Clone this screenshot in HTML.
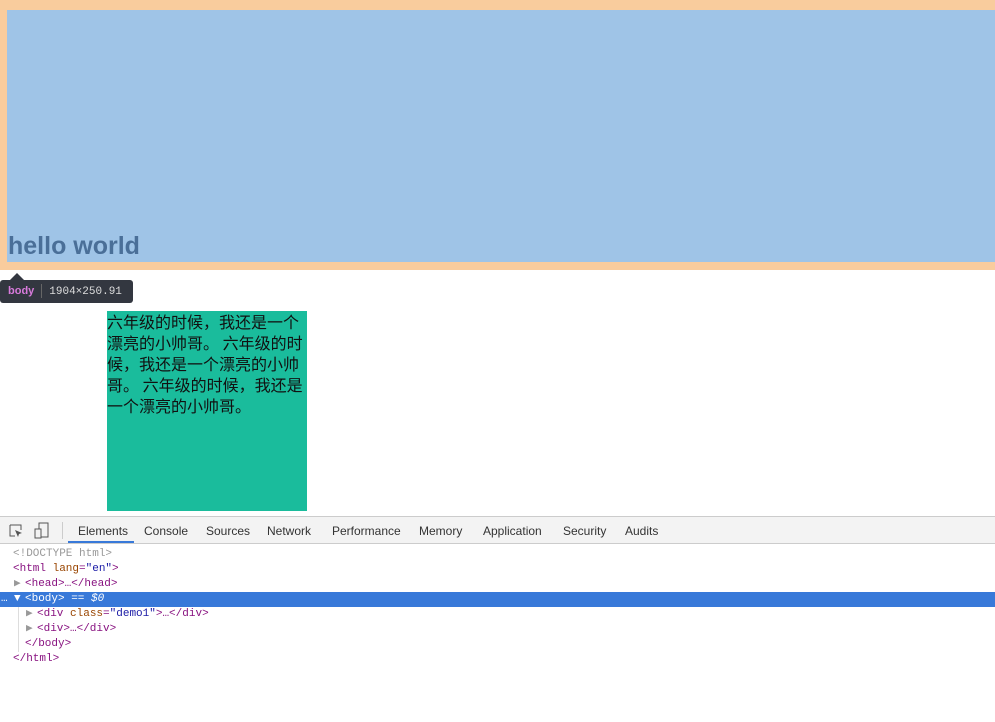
<!DOCTYPE html>
<html><head><meta charset="utf-8"><style>
*{margin:0;padding:0;box-sizing:border-box}
body{width:995px;height:722px;overflow:hidden;background:#fff;position:relative;font-family:"Liberation Sans","Noto Sans CJK SC",sans-serif}
.orange{position:absolute;left:0;top:0;width:995px;height:270px;background:#f9cc9d}
.blue{position:absolute;left:7px;top:10px;width:988px;height:252px;background:#9fc4e7}
.hw{position:absolute;left:8px;top:232px;font-size:25px;font-weight:bold;color:#4a6f98}
.tip{position:absolute;left:0;top:280px;width:133px;height:23px;background:#333740;border-radius:3px;color:#ddd;font-family:"Liberation Mono",monospace;font-size:11px;line-height:23px;padding-left:8px}
.tip:before{content:"";position:absolute;left:10px;top:-7px;border:7px solid transparent;border-top:0;border-bottom-color:#333740}
.tip b{color:#d87adb;font-weight:bold;font-family:"Liberation Sans",sans-serif}
.tip i{display:inline-block;width:1px;height:14px;background:#666;vertical-align:middle;margin:0 7px}
.green{position:absolute;left:107px;top:311px;width:200px;height:200px;background:#1abc9c;font-size:16px;line-height:21px;color:#111;white-space:nowrap;font-family:"Noto Sans CJK SC",sans-serif}
.tb{position:absolute;left:0;top:516px;width:995px;height:28px;background:#f3f3f3;border-top:1px solid #ccc;border-bottom:1px solid #ccc;font-size:12px;color:#333}
.tb span{position:absolute;top:7px}
.sel{position:absolute;left:68px;top:24px;width:66px;height:2px;background:#3879d9}
.code{position:absolute;left:0;top:547px;width:995px;font-family:"Liberation Mono",monospace;font-size:11px;line-height:15px}
.code div{height:15px;white-space:pre;color:#881280;position:relative}
.code div span.x{position:absolute;top:0}
.g{color:#999}.a{color:#994500}.v{color:#1a1aa6}
.hl{background:#3879d9;color:#fff!important}
.hl *{color:#fff!important}
</style></head><body>
<div class="orange"></div><div class="blue"></div>
<div class="hw">hello world</div>
<div class="tip"><b>body</b><i></i>1904×250.91</div>
<div class="green">六年级的时候，我还是一个<br>漂亮的小帅哥。 六年级的时<br>候，我还是一个漂亮的小帅<br>哥。 六年级的时候，我还是<br>一个漂亮的小帅哥。</div>
<div class="tb">
<svg style="position:absolute;left:8px;top:6px" width="16" height="16"><path d="M2 2h11v5M2 2v11h5" fill="none" stroke="#555"/><path d="M7 7l7 3-3 1-1 3z" fill="#555"/></svg>
<svg style="position:absolute;left:34px;top:5px" width="16" height="17"><rect x="5" y="1" width="9" height="14" fill="none" stroke="#555"/><rect x="1" y="7" width="6" height="9" fill="#f3f3f3" stroke="#555"/></svg>
<div style="position:absolute;left:62px;top:5px;width:1px;height:17px;background:#ccc"></div>
<span style="left:78px">Elements</span><span style="left:144px">Console</span><span style="left:206px">Sources</span><span style="left:267px">Network</span><span style="left:332px">Performance</span><span style="left:419px">Memory</span><span style="left:483px">Application</span><span style="left:563px">Security</span><span style="left:625px">Audits</span>
<div class="sel"></div></div>
<div style="position:absolute;left:18px;top:607px;width:1px;height:45px;background:#ddd"></div>
<div class="code">
<div><span class="x g" style="left:13px">&lt;!DOCTYPE html&gt;</span></div>
<div><span class="x" style="left:13px">&lt;html <span class="a">lang</span>=<span class="v">"en"</span>&gt;</span></div>
<div><span class="x g" style="left:14px">▶</span><span class="x" style="left:25px">&lt;head&gt;…&lt;/head&gt;</span></div>
<div class="hl"><span class="x" style="left:1px">…</span><span class="x" style="left:14px">▼</span><span class="x" style="left:25px">&lt;body&gt; == <i>$0</i></span></div>
<div><span class="x g" style="left:26px">▶</span><span class="x" style="left:37px">&lt;div <span class="a">class</span>=<span class="v">"demo1"</span>&gt;…&lt;/div&gt;</span></div>
<div><span class="x g" style="left:26px">▶</span><span class="x" style="left:37px">&lt;div&gt;…&lt;/div&gt;</span></div>
<div><span class="x" style="left:25px">&lt;/body&gt;</span></div>
<div><span class="x" style="left:13px">&lt;/html&gt;</span></div>
</div>
</body></html>
